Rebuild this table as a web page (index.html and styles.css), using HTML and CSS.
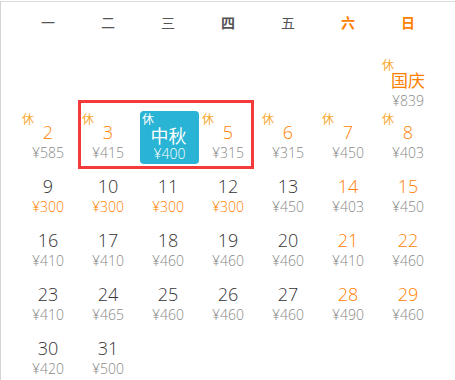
FILE: index.html
```html
<!DOCTYPE html>
<html lang="zh">
<head>
<meta charset="utf-8">
<link rel="stylesheet" href="styles.css">
</head>
<body>
<div class="cal">
  <div class="week">
    <span>一</span><span>二</span><span>三</span><span class="we">四</span><span>五</span><span class="wk">六</span><span class="wk">日</span>
  </div>
  <div class="grid">
    <div class="sel-frame"></div>
    <div class="cell empty"></div><div class="cell empty"></div><div class="cell empty"></div><div class="cell empty"></div><div class="cell empty"></div><div class="cell empty"></div>
    <div class="cell"><span class="rest">休</span><div class="d hol cn">国庆</div><div class="p">¥839</div></div>

    <div class="cell"><span class="rest">休</span><div class="d hol">2</div><div class="p">¥585</div></div>
    <div class="cell"><span class="rest">休</span><div class="d hol">3</div><div class="p">¥415</div></div>
    <div class="cell active"><div class="box"><span class="rest">休</span><div class="d cn">中秋</div><div class="p">¥400</div></div></div>
    <div class="cell"><span class="rest">休</span><div class="d hol">5</div><div class="p">¥315</div></div>
    <div class="cell"><span class="rest">休</span><div class="d hol">6</div><div class="p">¥315</div></div>
    <div class="cell"><span class="rest">休</span><div class="d hol">7</div><div class="p">¥450</div></div>
    <div class="cell"><span class="rest">休</span><div class="d hol">8</div><div class="p">¥403</div></div>

    <div class="cell"><div class="d">9</div><div class="p low">¥300</div></div>
    <div class="cell"><div class="d">10</div><div class="p low">¥300</div></div>
    <div class="cell"><div class="d">11</div><div class="p low">¥300</div></div>
    <div class="cell"><div class="d">12</div><div class="p low">¥300</div></div>
    <div class="cell"><div class="d">13</div><div class="p">¥450</div></div>
    <div class="cell"><div class="d hol">14</div><div class="p">¥403</div></div>
    <div class="cell"><div class="d hol">15</div><div class="p">¥450</div></div>

    <div class="cell"><div class="d">16</div><div class="p">¥410</div></div>
    <div class="cell"><div class="d">17</div><div class="p">¥410</div></div>
    <div class="cell"><div class="d">18</div><div class="p">¥460</div></div>
    <div class="cell"><div class="d">19</div><div class="p">¥460</div></div>
    <div class="cell"><div class="d">20</div><div class="p">¥460</div></div>
    <div class="cell"><div class="d hol">21</div><div class="p">¥410</div></div>
    <div class="cell"><div class="d hol">22</div><div class="p">¥460</div></div>

    <div class="cell"><div class="d">23</div><div class="p">¥410</div></div>
    <div class="cell"><div class="d">24</div><div class="p">¥465</div></div>
    <div class="cell"><div class="d">25</div><div class="p">¥460</div></div>
    <div class="cell"><div class="d">26</div><div class="p">¥460</div></div>
    <div class="cell"><div class="d">27</div><div class="p">¥460</div></div>
    <div class="cell"><div class="d hol">28</div><div class="p">¥490</div></div>
    <div class="cell"><div class="d hol">29</div><div class="p">¥460</div></div>

    <div class="cell"><div class="d">30</div><div class="p">¥420</div></div>
    <div class="cell"><div class="d">31</div><div class="p">¥500</div></div>
  </div>
</div>
</body>
</html>
```
FILE: styles.css
```css
html, body {
  margin: 0;
  padding: 0;
  background: #fff;
}
body {
  padding-top: 1px;
  font-family: "Open Sans", "Noto Sans CJK SC", sans-serif;
}
.cal {
  border-top: 1px solid #dcdcdc;
  border-left: 1px solid #d4d4d4;
  height: 379px;
  box-sizing: border-box;
  padding-left: 17px;
}
.week {
  display: grid;
  grid-template-columns: repeat(7, 60px);
  height: 41px;
  line-height: 41px;
  margin-bottom: 14px;
  font-family: "Noto Sans CJK SC", sans-serif;
  font-size: 14px;
  color: #555;
  text-align: center;
}
.week .we { font-weight: bold; }
.week .wk { color: #ff8000; font-weight: bold; }
.grid {
  position: relative;
  display: grid;
  grid-template-columns: repeat(7, 60px);
  grid-auto-rows: 54px;
}
.cell {
  position: relative;
  text-align: center;
}
.rest {
  position: absolute;
  left: 4px;
  top: 2px;
  font-family: "Noto Sans CJK SC", sans-serif;
  font-size: 12px;
  line-height: 12px;
  color: #f9a830;
}
.d {
  margin-top: 10px;
  height: 22px;
  line-height: 22px;
  font-size: 18px;
  font-weight: 350;
  color: #333;
}
.d.cn {
  font-family: "Noto Sans CJK SC", sans-serif;
  font-weight: 400;
  font-size: 17px;
  margin-top: 12px;
}
.hol { color: #ff7f00; }
.p {
  margin-top: 1px;
  line-height: 18px;
  font-size: 14px;
  font-weight: 300;
  color: #888;
}
.p.low { color: #ff8000; }
.active .box {
  margin-left: 2px;
  width: 59px;
  height: 53px;
  border-radius: 4px;
  background: #29b3d4;
  position: relative;
  overflow: hidden;
}
.active .box .rest { color: #fff; left: 2px; top: 2px; }
.active .box .d { color: #fff; font-size: 18px; margin-top: 14px; height: 20px; line-height: 20px; }
.active .box .p { color: #fff; margin-top: 0; }
.active .box .cn { margin-left: -2px; }
.sel-frame {
  position: absolute;
  left: 60px;
  top: 43px;
  width: 176px;
  height: 69px;
  border: 3px solid #f43a3a;
  box-sizing: border-box;
  pointer-events: none;
  z-index: 2;
}
```
